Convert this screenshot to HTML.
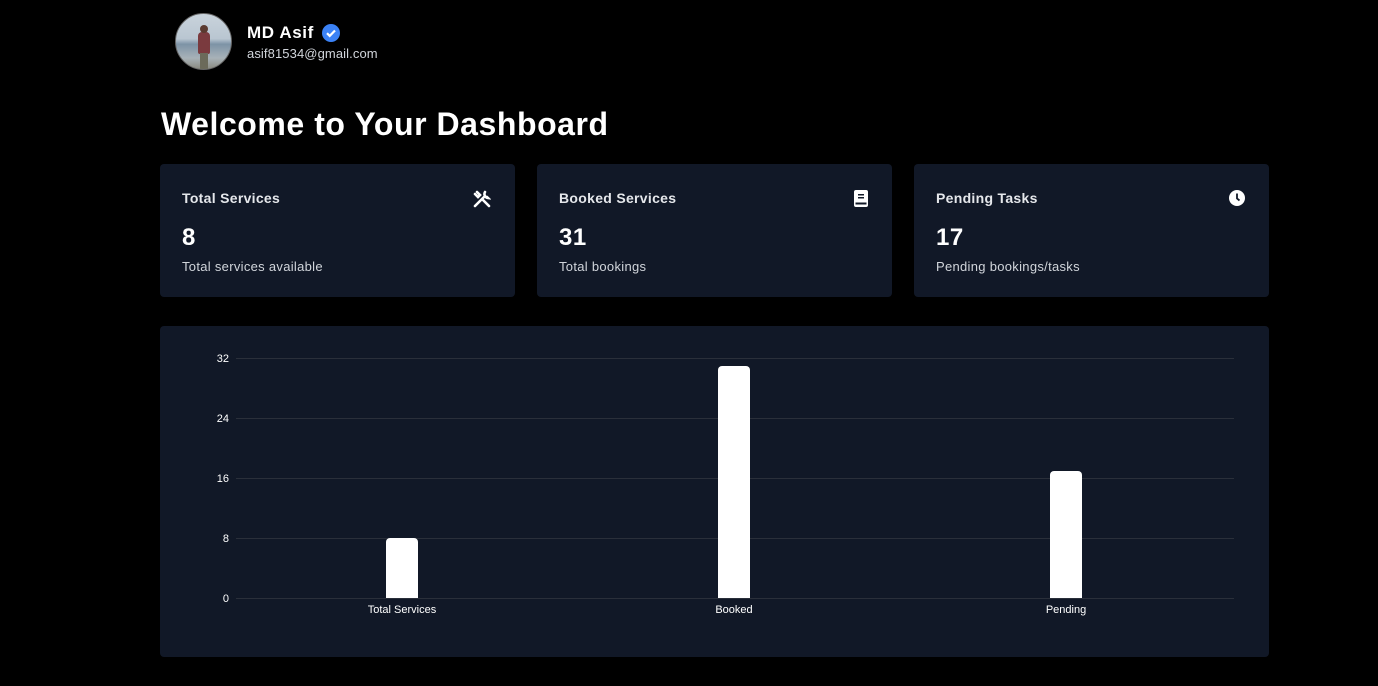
<!DOCTYPE html>
<html><head><style>
body{margin:0;background:#000;width:1378px;height:686px;overflow:hidden;font-family:"Liberation Sans",sans-serif;color:#fff;position:relative}
.a{position:absolute}
.card{position:absolute;top:164px;width:355px;height:133px;background:#111827;border-radius:4px}
.card .t{position:absolute;left:22px;top:26px;font-size:14px;font-weight:bold;color:#e5e7eb;letter-spacing:0.3px}
.card .n{position:absolute;left:22px;top:60px;font-size:24px;font-weight:bold;letter-spacing:0.5px}
.card .s{position:absolute;left:22px;top:95px;font-size:13px;color:#d1d5db;letter-spacing:0.3px}
.card svg{position:absolute;right:24px;top:26px}
</style></head><body>
<div class="a" style="left:175px;top:13px;width:57px;height:57px;border-radius:50%;background:linear-gradient(#c9d3dc 0,#b9c6d1 45%,#7d93a6 55%,#a8b2b8 80%,#8a8a80 100%);overflow:hidden;border:1px solid #666;box-sizing:border-box">
<div class="a" style="left:22px;top:18px;width:12px;height:22px;background:#7a3a3e;border-radius:4px 4px 2px 2px"></div>
<div class="a" style="left:24px;top:11px;width:8px;height:8px;background:#5a3a30;border-radius:50%"></div>
<div class="a" style="left:24px;top:39px;width:8px;height:17px;background:#6b6a5a"></div>
</div>
<div class="a" style="left:247px;top:23px;font-size:17px;font-weight:bold;letter-spacing:0.6px">MD Asif</div>
<svg class="a" style="left:322px;top:24px" width="18" height="18" viewBox="0 0 18 18"><circle cx="9" cy="9" r="9" fill="#3b82f6"/><path d="M5 9.2l2.7 2.7L13 6.5" stroke="#fff" stroke-width="2.2" fill="none"/></svg>
<div class="a" style="left:247px;top:46px;font-size:13px;color:#d1d5db;letter-spacing:0.1px">asif81534@gmail.com</div>
<div class="a" style="left:161px;top:106px;font-size:32px;font-weight:bold;letter-spacing:0.55px">Welcome to Your Dashboard</div>

<div class="card" style="left:160px"><div class="t">Total Services</div><div class="n">8</div><div class="s">Total services available</div>
<svg width="18" height="18" viewBox="0 0 18 18"><path d="M2 16L11 7M4 2l3 3-2 2-3-3M12 2a4 4 0 0 0 3 6l-1-1M16 16L9 9" stroke="#fff" stroke-width="2.6" fill="none" stroke-linecap="round"/></svg></div>
<div class="card" style="left:537px"><div class="t">Booked Services</div><div class="n">31</div><div class="s">Total bookings</div>
<svg width="14" height="17" viewBox="0 0 14 17"><rect x="0" y="0" width="14" height="17" rx="2" fill="#fff"/><rect x="4" y="4" width="6" height="1.5" fill="#111827"/><rect x="4" y="7" width="6" height="1.5" fill="#111827"/><rect x="1.5" y="12.5" width="11" height="2" fill="#111827"/></svg></div>
<div class="card" style="left:914px"><div class="t">Pending Tasks</div><div class="n">17</div><div class="s">Pending bookings/tasks</div>
<svg width="16" height="16" viewBox="0 0 16 16"><circle cx="8" cy="8" r="8" fill="#fff"/><path d="M8 3.5V8.5l2.5 2" stroke="#111827" stroke-width="1.8" fill="none"/></svg></div>

<div class="a" style="left:160px;top:326px;width:1109px;height:331px;background:#111827;border-radius:4px"></div>
<svg class="a" style="left:0;top:0" width="1378" height="686">
<g stroke="#2a2f3a" stroke-width="1">
<line x1="236" x2="1234" y1="358.5" y2="358.5"/><line x1="236" x2="1234" y1="418.5" y2="418.5"/><line x1="236" x2="1234" y1="478.5" y2="478.5"/><line x1="236" x2="1234" y1="538.5" y2="538.5"/><line x1="236" x2="1234" y1="598.5" y2="598.5"/>
</g>
<g fill="#fff" font-size="11" font-family="Liberation Sans" text-anchor="end">
<text x="229" y="362">32</text><text x="229" y="422">24</text><text x="229" y="482">16</text><text x="229" y="542">8</text><text x="229" y="602">0</text>
</g>
<g fill="#fff">
<path d="M386 598V542a4 4 0 0 1 4-4h24a4 4 0 0 1 4 4V598z"/>
<path d="M718 598V370a4 4 0 0 1 4-4h24a4 4 0 0 1 4 4V598z"/>
<path d="M1050 598V475a4 4 0 0 1 4-4h24a4 4 0 0 1 4 4V598z"/>
</g>
<g fill="#fff" font-size="11" font-family="Liberation Sans" text-anchor="middle">
<text x="402" y="613">Total Services</text><text x="734" y="613">Booked</text><text x="1066" y="613">Pending</text>
</g>
</svg>
</body></html>
